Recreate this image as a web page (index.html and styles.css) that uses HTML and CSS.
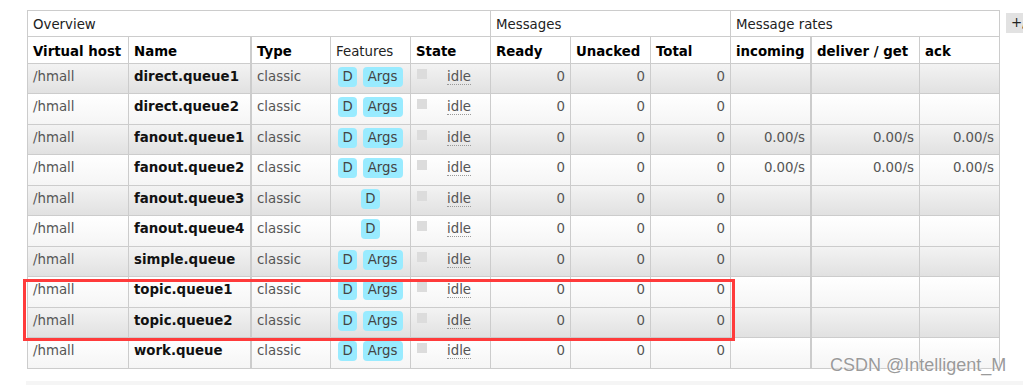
FILE: index.html
```html
<!DOCTYPE html>
<html lang="en">
<head>
<meta charset="utf-8">
<title>Queues</title>
<link rel="stylesheet" href="styles.css">
</head>
<body>
<div class="page">
  <div class="section">
    <table class="list">
      <colgroup>
        <col class="c-vhost"><col class="c-name"><col class="c-type"><col class="c-feat"><col class="c-state">
        <col class="c-num"><col class="c-num"><col class="c-num">
        <col class="c-in"><col class="c-deliver"><col class="c-ack">
      </colgroup>
      <thead>
        <tr class="group">
          <th colspan="5">Overview</th>
          <th colspan="3">Messages</th>
          <th colspan="3">Message rates</th>
        </tr>
        <tr class="cols">
          <th>Virtual host</th>
          <th class="sep">Name</th>
          <th>Type</th>
          <th class="plain">Features</th>
          <th>State</th>
          <th>Ready</th>
          <th>Unacked</th>
          <th>Total</th>
          <th class="sep">incoming</th>
          <th>deliver / get</th>
          <th>ack</th>
        </tr>
      </thead>
      <tbody>
        <tr class="alt1">
          <td>/hmall</td><td class="name sep">direct.queue1</td><td>classic</td>
          <td><div class="features"><span class="badge">D</span><span class="badge wide">Args</span></div></td>
          <td><span class="state-box"></span><abbr class="idle">idle</abbr></td>
          <td class="num">0</td><td class="num">0</td><td class="num">0</td>
          <td class="num sep"></td><td class="num"></td><td class="num"></td>
        </tr>
        <tr class="alt2">
          <td>/hmall</td><td class="name sep">direct.queue2</td><td>classic</td>
          <td><div class="features"><span class="badge">D</span><span class="badge wide">Args</span></div></td>
          <td><span class="state-box"></span><abbr class="idle">idle</abbr></td>
          <td class="num">0</td><td class="num">0</td><td class="num">0</td>
          <td class="num sep"></td><td class="num"></td><td class="num"></td>
        </tr>
        <tr class="alt1">
          <td>/hmall</td><td class="name sep">fanout.queue1</td><td>classic</td>
          <td><div class="features"><span class="badge">D</span><span class="badge wide">Args</span></div></td>
          <td><span class="state-box"></span><abbr class="idle">idle</abbr></td>
          <td class="num">0</td><td class="num">0</td><td class="num">0</td>
          <td class="num sep">0.00/s</td><td class="num">0.00/s</td><td class="num">0.00/s</td>
        </tr>
        <tr class="alt2">
          <td>/hmall</td><td class="name sep">fanout.queue2</td><td>classic</td>
          <td><div class="features"><span class="badge">D</span><span class="badge wide">Args</span></div></td>
          <td><span class="state-box"></span><abbr class="idle">idle</abbr></td>
          <td class="num">0</td><td class="num">0</td><td class="num">0</td>
          <td class="num sep">0.00/s</td><td class="num">0.00/s</td><td class="num">0.00/s</td>
        </tr>
        <tr class="alt1">
          <td>/hmall</td><td class="name sep">fanout.queue3</td><td>classic</td>
          <td><div class="features"><span class="badge">D</span></div></td>
          <td><span class="state-box"></span><abbr class="idle">idle</abbr></td>
          <td class="num">0</td><td class="num">0</td><td class="num">0</td>
          <td class="num sep"></td><td class="num"></td><td class="num"></td>
        </tr>
        <tr class="alt2">
          <td>/hmall</td><td class="name sep">fanout.queue4</td><td>classic</td>
          <td><div class="features"><span class="badge">D</span></div></td>
          <td><span class="state-box"></span><abbr class="idle">idle</abbr></td>
          <td class="num">0</td><td class="num">0</td><td class="num">0</td>
          <td class="num sep"></td><td class="num"></td><td class="num"></td>
        </tr>
        <tr class="alt1">
          <td>/hmall</td><td class="name sep">simple.queue</td><td>classic</td>
          <td><div class="features"><span class="badge">D</span><span class="badge wide">Args</span></div></td>
          <td><span class="state-box"></span><abbr class="idle">idle</abbr></td>
          <td class="num">0</td><td class="num">0</td><td class="num">0</td>
          <td class="num sep"></td><td class="num"></td><td class="num"></td>
        </tr>
        <tr class="alt2">
          <td>/hmall</td><td class="name sep">topic.queue1</td><td>classic</td>
          <td><div class="features"><span class="badge">D</span><span class="badge wide">Args</span></div></td>
          <td><span class="state-box"></span><abbr class="idle">idle</abbr></td>
          <td class="num">0</td><td class="num">0</td><td class="num">0</td>
          <td class="num sep"></td><td class="num"></td><td class="num"></td>
        </tr>
        <tr class="alt1">
          <td>/hmall</td><td class="name sep">topic.queue2</td><td>classic</td>
          <td><div class="features"><span class="badge">D</span><span class="badge wide">Args</span></div></td>
          <td><span class="state-box"></span><abbr class="idle">idle</abbr></td>
          <td class="num">0</td><td class="num">0</td><td class="num">0</td>
          <td class="num sep"></td><td class="num"></td><td class="num"></td>
        </tr>
        <tr class="alt2">
          <td>/hmall</td><td class="name sep">work.queue</td><td>classic</td>
          <td><div class="features"><span class="badge">D</span><span class="badge wide">Args</span></div></td>
          <td><span class="state-box"></span><abbr class="idle">idle</abbr></td>
          <td class="num">0</td><td class="num">0</td><td class="num">0</td>
          <td class="num sep"></td><td class="num"></td><td class="num"></td>
        </tr>
      </tbody>
    </table>
    <button class="toggle" type="button">+/-</button>
  </div>
  <div class="next-section"></div>
  <div class="highlight"></div>
  <div class="watermark">CSDN @Intelligent_M</div>
</div>
</body>
</html>
```

FILE: styles.css
```css
* { box-sizing: border-box; }

html, body {
  margin: 0;
  padding: 0;
  background: #fff;
}

body {
  font-family: "DejaVu Sans", Verdana, sans-serif;
  font-size: 13.33px;
  color: #555;
}

.page {
  position: relative;
  width: 1023px;
  height: 385px;
  overflow: hidden;
  padding-top: 10px;
}

.section {
  display: flex;
  align-items: flex-start;
  padding-left: 27px;
}

table.list {
  flex: none;
  width: 973px;
  table-layout: fixed;
  border-collapse: separate;
  border-spacing: 0;
  border-top: 1px solid #ccc;
  border-left: 1px solid #ccc;
}

col.c-vhost { width: 101px; }
col.c-name { width: 123px; }
col.c-type { width: 79px; }
col.c-feat { width: 80px; }
col.c-state { width: 80px; }
col.c-num { width: 80px; }
col.c-in { width: 81px; }
col.c-deliver { width: 108px; }
col.c-ack { width: 80px; }

.list th,
.list td {
  border-right: 1px solid #ccc;
  border-bottom: 1px solid #ccc;
  padding: 0 5px;
  text-align: left;
  vertical-align: top;
  white-space: nowrap;
  overflow: hidden;
}

.list .sep { border-right-width: 2px; }

.list tr.group { height: 26px; }
.list tr.group th {
  padding-top: 6px;
  font-weight: normal;
  color: #222;
  background: #fff;
}

.list tr.cols { height: 27px; }
.list tr.cols th {
  padding-top: 7px;
  font-weight: bold;
  color: #000;
  background: #fff;
}
.list tr.cols th.plain {
  font-weight: normal;
  color: #222;
}

.list tbody td {
  padding-top: 5px;
  color: #555;
}

.list tr.alt1 { height: 30px; }
.list tr.alt2 { height: 31px; }
.list tr.alt1 td { background: linear-gradient(#f3f3f3, #e1e1e1); }
.list tr.alt2 td { background: linear-gradient(#ffffff, #f5f5f5); }

.list td.name {
  font-weight: bold;
  color: #111;
}

.list td.num { text-align: right; }

.features {
  display: flex;
  justify-content: center;
  gap: 6px;
  margin-top: -2px;
}

.badge {
  display: block;
  height: 20px;
  line-height: 20px;
  padding: 0 4px;
  background: #99ebff;
  border-radius: 4px;
  color: #444;
}
.badge.wide { padding: 0 5px; }

.state-box {
  display: inline-block;
  width: 10px;
  height: 10px;
  margin: 0 20px 0 1px;
  background: #dcdcdc;
  vertical-align: 2px;
}

abbr.idle {
  text-decoration: none;
  border-bottom: 1px dotted #999;
  color: #555;
}

.toggle {
  flex: none;
  margin: 3px 0 0 6px;
  height: 20px;
  padding: 0 5px;
  border: none;
  background: #e2e2e2;
  font: inherit;
  line-height: 20px;
  color: #222;
}

.next-section {
  margin: 12px 0 0 26px;
  height: 24px;
  background: #f5f5f5;
}

.highlight {
  position: absolute;
  left: 23px;
  top: 279px;
  width: 712px;
  height: 62px;
  border: 3px solid #ff3b3b;
}

.watermark {
  position: absolute;
  left: 830px;
  top: 355px;
  font-family: "Liberation Sans", Arial, sans-serif;
  font-size: 18px;
  line-height: 20px;
  color: #9a9a9a;
  text-shadow: 0 0 1px #fff, 0 0 2px #fff;
  white-space: nowrap;
}
```
